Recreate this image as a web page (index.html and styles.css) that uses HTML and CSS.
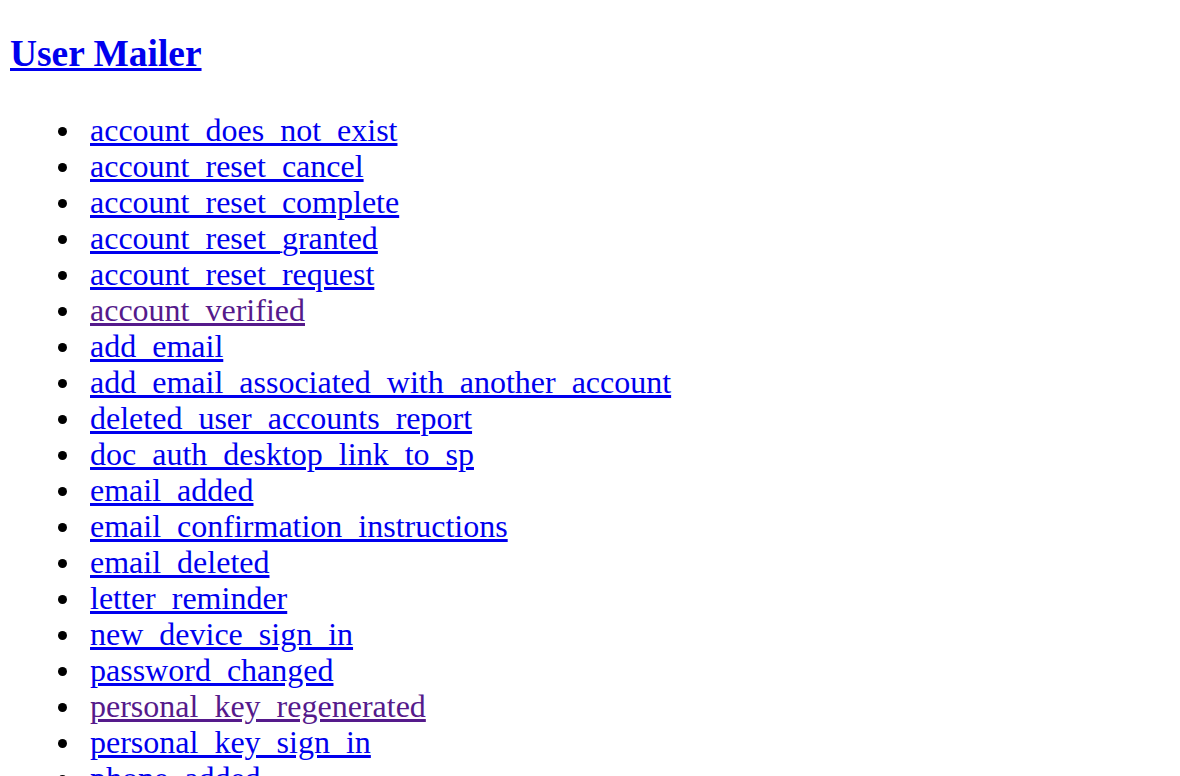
FILE: index.html
```html
<!DOCTYPE html>
<html>
<head>
<meta charset="utf-8">
<title>Mailer Previews</title>
<link rel="stylesheet" href="styles.css">
</head>
<body>
<h3 class="mailer-title"><a class="link" href="#user_mailer">User Mailer</a></h3>
<ul class="preview-list">
<li><a class="link" href="#1">account_does_not_exist</a></li>
<li><a class="link" href="#2">account_reset_cancel</a></li>
<li><a class="link" href="#3">account_reset_complete</a></li>
<li><a class="link" href="#4">account_reset_granted</a></li>
<li><a class="link" href="#5">account_reset_request</a></li>
<li><a class="link visited" href="#6">account_verified</a></li>
<li><a class="link" href="#7">add_email</a></li>
<li><a class="link" href="#8">add_email_associated_with_another_account</a></li>
<li><a class="link" href="#9">deleted_user_accounts_report</a></li>
<li><a class="link" href="#10">doc_auth_desktop_link_to_sp</a></li>
<li><a class="link" href="#11">email_added</a></li>
<li><a class="link" href="#12">email_confirmation_instructions</a></li>
<li><a class="link" href="#13">email_deleted</a></li>
<li><a class="link" href="#14">letter_reminder</a></li>
<li><a class="link" href="#15">new_device_sign_in</a></li>
<li><a class="link" href="#16">password_changed</a></li>
<li><a class="link visited" href="#17">personal_key_regenerated</a></li>
<li><a class="link" href="#18">personal_key_sign_in</a></li>
<li><a class="link" href="#19">phone_added</a></li>
</ul>
</body>
</html>
```
FILE: styles.css
```css
html, body {
  background: #ffffff;
}
body {
  margin: 0 10px;
  font-family: "Liberation Serif", "Times New Roman", serif;
  font-size: 32px;
  color: #000000;
}
.mailer-title {
  font-size: 37.44px;
  line-height: 43px;
  font-weight: bold;
  margin: 32px 0 37px;
}
.preview-list {
  margin: 0;
  padding-left: 80px;
  list-style: none;
}
.preview-list li {
  line-height: 36px;
}
.preview-list li::before {
  content: "";
  display: inline-block;
  width: 9px;
  height: 9px;
  border-radius: 50%;
  background: #000000;
  margin-left: -32px;
  margin-right: 23px;
  vertical-align: 5px;
}
.link {
  color: #0000ee;
  text-decoration: underline;
}
.link.visited {
  color: #551a8b;
}
```
